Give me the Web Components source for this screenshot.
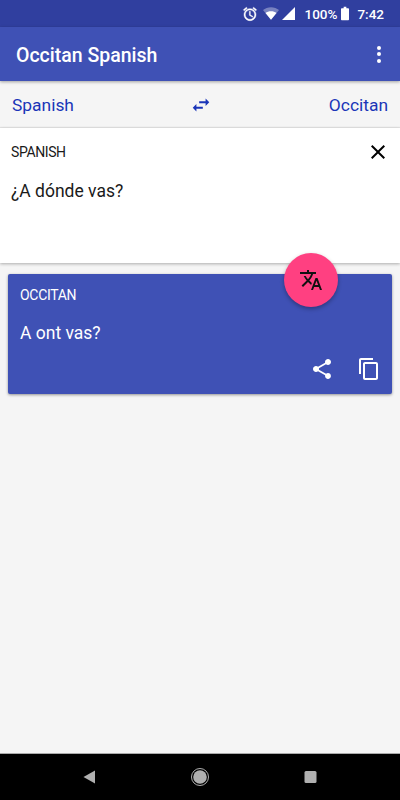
<!DOCTYPE html>
<html>
<head>
<meta charset="utf-8">
<style>
html, body { margin: 0; padding: 0; width: 400px; height: 800px; overflow: hidden; background: #f5f5f5; font-family: Roboto, sans-serif; }
translator-app { height: 800px; }
</style>
</head>
<body>
<translator-app></translator-app>
<script>
class StatusBar extends HTMLElement {
    constructor() {
        super();
        this.attachShadow({mode: 'open'}).innerHTML = `<style>
            :host { display: flex; align-items: center; justify-content: flex-end; height: 27px; background: #303f9f; color: #fff; font: 500 13.5px Roboto, sans-serif; padding-right: 16px; box-sizing: border-box; }
            svg { display: block; fill: #fff; }
            .alarm { margin-right: 5px; stroke: #fff; stroke-width: .6; }
            .wifi { margin-right: 3px; }
            .cell { margin-right: 9px; }
            .batt { margin: 0 8px 0 4px; }
        </style>
        <svg class="alarm" width="16" height="16" viewBox="0 0 24 24"><path d="M22 5.720l-4.600-3.860-1.290 1.530 4.600 3.860L22 5.720zM7.880 3.390L6.600 1.860 2 5.710l1.290 1.530 4.590-3.850zM12.500 8H11v6l4.750 2.850.75-1.230-4-2.370V8zM12 4c-4.970 0-9 4.030-9 9s4.030 9 9 9 9-4.030 9-9-4.030-9-9-9zm0 16c-3.870 0-7-3.130-7-7s3.130-7 7-7 7 3.130 7 7-3.130 7-7 7z"/></svg>
        <svg class="wifi" width="16" height="13" viewBox="0 0 18 14"><path d="M0 3.200C2.400 1.200 5.500 0 9 0s6.600 1.200 9 3.200L9 14z" opacity=".35"/><path d="M2.800 6.500C4.500 5.200 6.600 4.500 9 4.500s4.500.7 6.200 2L9 14z"/></svg>
        <svg class="cell" width="13" height="13" viewBox="0 0 14 14"><path d="M14 0v14H0z"/></svg>
        <span>100%</span>
        <svg class="batt" width="8" height="15" viewBox="0 0 9 15"><path d="M3 0h3v1.500h2.200c.4 0 .8.300.8.800v12c0 .4-.4.700-.8.700H.8c-.4 0-.8-.3-.8-.7v-12c0-.5.4-.8.800-.8H3z"/></svg>
        <span>7:42</span>`;
    }
}

class AppBar extends HTMLElement {
    constructor() {
        super();
        this.attachShadow({mode: 'open'}).innerHTML = `<style>
            :host { display: flex; align-items: center; justify-content: space-between; height: 54px; padding: 0 19px 0 16px; background: #3f51b5; color: #fff; box-shadow: 0 1px 3px rgba(0,0,0,.35); position: relative; z-index: 2; }
            .title { font: 500 19.5px Roboto, sans-serif; padding-top: 2px; }
            .more { display: flex; flex-direction: column; gap: 2.500px; }
            .more i { display: block; width: 4px; height: 4px; border-radius: 50%; background: #fff; }
        </style>
        <span class="title"><slot></slot></span>
        <span class="more"><i></i><i></i><i></i></span>`;
    }
}

class LangRow extends HTMLElement {
    constructor() {
        super();
        this.attachShadow({mode: 'open'}).innerHTML = `<style>
            :host { display: flex; align-items: center; justify-content: space-between; height: 47px; padding: 1px 12px 0; box-sizing: border-box; background: #f5f5f5; color: #1a35b8; font: 400 17.4px Roboto, sans-serif; }
            svg { display: block; fill: #1a35b8; }
        </style>
        <span>${this.getAttribute('from')}</span>
        <svg width="22" height="22" viewBox="0 0 24 24"><path d="M6.990 11L3 15l3.990 4v-3H14v-2H6.990v-3zM21 9l-3.990-4v3H10v2h7.010v3L21 9z"/></svg>
        <span>${this.getAttribute('to')}</span>`;
    }
}

class InputCard extends HTMLElement {
    constructor() {
        super();
        this.attachShadow({mode: 'open'}).innerHTML = `<style>
            :host { display: block; height: 135px; box-sizing: border-box; padding: 14px 10px 0 11px; background: #fff; color: #1a1a1a; box-shadow: 0 1px 3px rgba(0,0,0,.3), 0 -1px 1px rgba(0,0,0,.06); position: relative; }
            .head { display: flex; align-items: center; justify-content: space-between; height: 20px; font: 400 14px Roboto, sans-serif; letter-spacing: -.4px; }
            svg { display: block; }
            .text { margin-top: 17px; font: 400 17.5px/24px Roboto, sans-serif; }
        </style>
        <div class="head"><span>${this.getAttribute('label')}</span>
            <svg width="24" height="24" viewBox="0 0 24 24"><path fill="#000" d="M19 6.410L17.590 5 12 10.590 6.410 5 5 6.410 10.590 12 5 17.590 6.410 19 12 13.410 17.590 19 19 17.590 13.410 12z"/></svg>
        </div>
        <div class="text"><slot></slot></div>`;
    }
}

class ResultCard extends HTMLElement {
    constructor() {
        super();
        this.attachShadow({mode: 'open'}).innerHTML = `<style>
            :host { display: block; height: 120px; margin: 11px 8px 0; box-sizing: border-box; padding: 12px 12px 0; background: #3f51b5; color: #fff; border-radius: 2px; box-shadow: 0 1px 3px rgba(0,0,0,.4); }
            .label { height: 20px; font: 400 14px/19px Roboto, sans-serif; letter-spacing: -.3px; }
            .text { margin-top: 15px; font: 400 17.5px/24px Roboto, sans-serif; }
            .actions { display: flex; justify-content: flex-end; gap: 23px; margin-top: 12px; margin-right: -1px; }
            svg { display: block; fill: #fff; }
        </style>
        <div class="label">${this.getAttribute('label')}</div>
        <div class="text"><slot></slot></div>
        <div class="actions">
            <svg width="24" height="24" viewBox="0 0 24 24"><path d="M18 16.080c-.76 0-1.440.3-1.960.77L8.910 12.700c.05-.23.09-.46.09-.7s-.04-.47-.09-.7l7.050-4.110c.54.5 1.250.81 2.040.81 1.660 0 3-1.340 3-3s-1.340-3-3-3-3 1.340-3 3c0 .24.040.47.090.7L8.040 9.810C7.500 9.310 6.790 9 6 9c-1.660 0-3 1.340-3 3s1.340 3 3 3c.79 0 1.500-.31 2.040-.81l7.120 4.160c-.05.21-.08.43-.08.65 0 1.610 1.310 2.920 2.920 2.920 1.610 0 2.920-1.310 2.920-2.920s-1.310-2.920-2.920-2.920z"/></svg>
            <svg width="24" height="24" viewBox="0 0 24 24"><path d="M16 1H4c-1.100 0-2 .9-2 2v14h2V3h12V1zm3 4H8c-1.100 0-2 .9-2 2v14c0 1.100.9 2 2 2h11c1.100 0 2-.9 2-2V7c0-1.100-.9-2-2-2zm0 16H8V7h11v14z"/></svg>
        </div>`;
    }
}

class TranslateFab extends HTMLElement {
    constructor() {
        super();
        this.attachShadow({mode: 'open'}).innerHTML = `<style>
            :host { position: absolute; left: 284px; top: 253px; width: 54px; height: 54px; display: flex; align-items: center; justify-content: center; border-radius: 50%; background: #ff4081; box-shadow: 0 2px 4px rgba(0,0,0,.3); z-index: 3; }
            svg { display: block; }
        </style>
        <svg width="24" height="24" viewBox="0 0 24 24"><path fill="#111" d="M12.870 15.070l-2.540-2.510.03-.03c1.740-1.940 2.980-4.170 3.710-6.530H17V4h-7V2H8v2H1v1.990h11.170C11.500 7.920 10.440 9.750 9 11.350 8.070 10.320 7.300 9.190 6.690 8h-2c.73 1.630 1.730 3.170 2.980 4.560l-5.090 5.020L4 19l5-5 3.110 3.110.76-2.040zM18.500 10h-2L12 22h2l1.120-3h4.750L21 22h2l-4.500-12zm-2.620 7l1.620-4.330L19.120 17h-3.240z"/></svg>`;
    }
}

class NavBar extends HTMLElement {
    constructor() {
        super();
        this.attachShadow({mode: 'open'}).innerHTML = `<style>
            :host { display: flex; align-items: center; justify-content: center; gap: 90px; height: 46px; background: #000; box-shadow: 0 -1px 0 #aaa; }
            svg { display: block; }
        </style>
        <svg width="20" height="20" viewBox="0 0 20 20"><path fill="#b0b0b0" d="M15 3.500v13L3.500 10z"/></svg>
        <svg width="20" height="20" viewBox="0 0 20 20"><circle cx="10" cy="10" r="8.500" fill="none" stroke="#b0b0b0" stroke-width="1"/><circle cx="10" cy="10" r="6.800" fill="#b0b0b0"/></svg>
        <svg width="20" height="20" viewBox="0 0 20 20"><rect x="4.500" y="4" width="12" height="12" rx="1.500" fill="#b0b0b0"/></svg>`;
    }
}

class TranslatorApp extends HTMLElement {
    constructor() {
        super();
        this.attachShadow({mode: 'open'}).innerHTML = `<style>
            :host { display: flex; flex-direction: column; width: 400px; position: relative; background: #f5f5f5; }
            main { flex: 1; }
        </style>
        <status-bar></status-bar>
        <app-bar>Occitan Spanish</app-bar>
        <lang-row from="Spanish" to="Occitan"></lang-row>
        <main>
            <input-card label="SPANISH">¿A dónde vas?</input-card>
            <result-card label="OCCITAN">A ont vas?</result-card>
        </main>
        <translate-fab></translate-fab>
        <nav-bar></nav-bar>`;
    }
}

customElements.define('status-bar', StatusBar);
customElements.define('app-bar', AppBar);
customElements.define('lang-row', LangRow);
customElements.define('input-card', InputCard);
customElements.define('result-card', ResultCard);
customElements.define('translate-fab', TranslateFab);
customElements.define('nav-bar', NavBar);
customElements.define('translator-app', TranslatorApp);
</script>
</body>
</html>
